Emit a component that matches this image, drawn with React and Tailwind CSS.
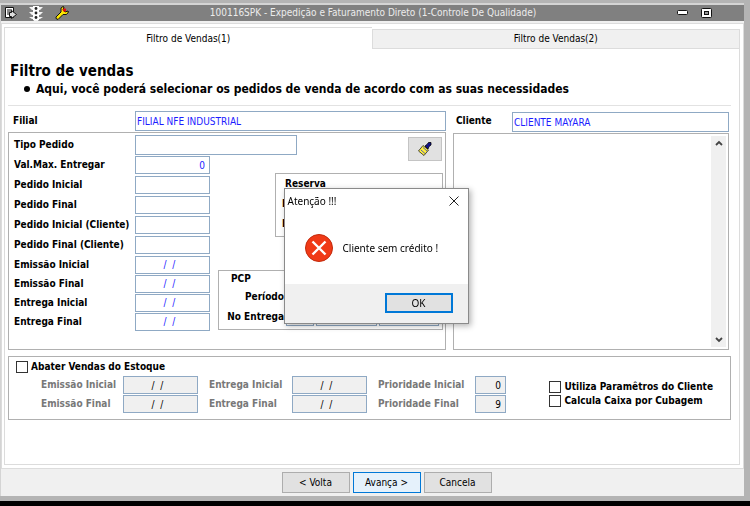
import React from 'react';

const box = 'border border-[#8fa9c4] bg-white text-[#1c1cff] outline-none';
const boxOff = 'h-[18px] border border-[#8fa9c4] bg-[#f0f0f0] font-normal text-black outline-none';
const panel = 'border border-[#b0b0b0]';
const winButton = 'h-[21px] w-[68px] border text-center leading-[18px]';

const textFields = [
  { id: 'valMax', label: 'Val.Max. Entregar', value: '0' },
  { id: 'pedidoInicial', label: 'Pedido Inicial', value: '' },
  { id: 'pedidoFinal', label: 'Pedido Final', value: '' },
  { id: 'pedidoInicialCliente', label: 'Pedido Inicial (Cliente)', value: '' },
  { id: 'pedidoFinalCliente', label: 'Pedido Final (Cliente)', value: '' },
];

const dateFields = [
  { id: 'emissaoInicial', label: 'Emissão Inicial' },
  { id: 'emissaoFinal', label: 'Emissão Final' },
  { id: 'entregaInicial', label: 'Entrega Inicial' },
  { id: 'entregaFinal', label: 'Entrega Final' },
];

const TitleBar = () => (
  <header className="flex h-4 items-center bg-[#808080] pr-8 pl-1 text-[#ececec]">
    <div className="flex items-center gap-3">
      <svg width="12" height="12" viewBox="0 0 12 12">
        <path d="M0.5 0.5h8v10h-8z" fill="#fff" stroke="#111" />
        <path d="M2 3h5M2 5h4M2 7h4" stroke="#111" />
        <path d="M6.5 3.5l5 4-5 4v-2h-2v-4h2z" fill="#ddd" stroke="#111" />
      </svg>
      <svg width="14" height="16" viewBox="0 0 14 16">
        <path d="M0 2h4V1h6v1h4l-3 3H3zM0 7h14l-3 3H3zM0 12h14l-3 2h-1l-1 2H5l-1-2H3z" fill="#f4f4f4" />
        <path d="M4 1h6v14H4z" fill="#fff" />
        <circle cx="7" cy="3.5" r="1.4" fill="#222" />
        <circle cx="7" cy="8" r="1.4" fill="#222" />
        <circle cx="7" cy="12.5" r="1.4" fill="#222" />
      </svg>
      <svg width="14" height="14" viewBox="0 0 14 14">
        <path d="M1 11l5-5V2l2-1.5 1 0.5-1 3 2 2 3-1 0.5 1-2 2.5H8l-5 5-2-1z" fill="#ffe800" stroke="#111" />
        <circle cx="9.5" cy="4" r="1.8" fill="#e01010" />
      </svg>
    </div>
    <h1 className="flex-1 text-center">100116SPK - Expedição e Faturamento Direto (1-Controle De Qualidade)</h1>
    <div className="flex items-center gap-3">
      <button type="button" aria-label="Minimizar">
        <svg width="12" height="6" viewBox="0 0 12 6">
          <rect x="0.5" y="0.5" width="10" height="4" rx="1" fill="#fff" stroke="#111" />
        </svg>
      </button>
      <button type="button" aria-label="Restaurar">
        <svg width="11" height="10" viewBox="0 0 11 10">
          <rect x="0.5" y="0.5" width="10" height="9" rx="1" fill="#fff" stroke="#111" />
          <rect x="3.5" y="3.5" width="4" height="3" fill="#999" stroke="#111" />
        </svg>
      </button>
    </div>
  </header>
);

const Dialog = () => (
  <div className="fixed inset-0 flex items-center justify-center pt-[5px] pl-0.5">
    <div
      role="dialog"
      aria-label="Atenção !!!"
      className="w-[185px] border border-[#8a8a8a] bg-white font-['Noto_Sans','Open_Sans',sans-serif] shadow-[2px_2px_6px_rgba(0,0,0,0.3)]"
    >
      <div className="flex h-6 items-center justify-between pr-2 pl-[3px]">
        <span>Atenção !!!</span>
        <button type="button" aria-label="Fechar">
          <svg width="12" height="12" viewBox="0 0 12 12">
            <path d="M1.5 1.5l9 9M10.5 1.5l-9 9" stroke="#222" fill="none" />
          </svg>
        </button>
      </div>
      <div className="flex h-[71px] items-center gap-[10px] pl-5">
        <svg width="28" height="28" viewBox="0 0 28 28">
          <circle cx="14" cy="14" r="13.5" fill="#f03a17" stroke="#c22a0c" />
          <path d="M7.5 7.5l13 13M20.5 7.5l-13 13" stroke="#fff" strokeWidth="2.4" />
        </svg>
        <p>Cliente sem crédito !</p>
      </div>
      <div className="flex h-[39px] items-center justify-end bg-[#f0f0f0] pr-[15px]">
        <button type="button" className="h-5 w-[68px] border-2 border-[#0078d7] bg-[#e1e1e1] leading-4">OK</button>
      </div>
    </div>
  </div>
);

const Check = ({ id, label }) => (
  <div className="flex h-[14px] items-center gap-[3px] font-bold">
    <input id={id} type="checkbox" className="size-3 appearance-none border border-[#333] bg-white" />
    <label htmlFor={id}>{label}</label>
  </div>
);

const ReservaGroup = () => (
  <fieldset className={`${panel} h-[64px] w-[168px] min-w-0 pt-0.5 pr-3 pl-[5px] font-bold`}>
    <h3 className="pb-0.5 pl-1">Reserva</h3>
    <div className="flex h-5 items-center justify-between pl-px">
      <label htmlFor="reservaInicial">Inicial</label>
      <input id="reservaInicial" className={`${box} h-[18px] w-[75px] font-normal`} />
    </div>
    <div className="flex h-5 items-center justify-between pl-px">
      <label htmlFor="reservaFinal">Final</label>
      <input id="reservaFinal" className={`${box} h-[18px] w-[75px] font-normal`} />
    </div>
  </fieldset>
);

const PcpGroup = () => (
  <fieldset className={`${panel} h-[60px] w-[225px] min-w-0 pr-[3px] font-bold`}>
    <h3 className="pl-3">PCP</h3>
    <div className="flex h-5 items-center gap-0.5">
      <label htmlFor="pcpPeriodo" className="w-[65px] text-right">Período</label>
      <input id="pcpPeriodo" className={`${box} h-[18px] w-7 font-normal`} />
    </div>
    <div className="flex h-5 items-center gap-0.5">
      <label htmlFor="pcpEntrega" className="w-[65px] text-right">No Entrega</label>
      <input id="pcpEntrega" className={`${box} h-[18px] w-7 font-normal`} />
      <input aria-label="Entrega de" className={`${box} h-[18px] min-w-0 flex-1 font-normal`} />
      <input aria-label="Entrega até" className={`${box} h-[18px] min-w-0 flex-1 font-normal`} />
    </div>
  </fieldset>
);

const ClearButton = () => (
  <button type="button" aria-label="Limpar" className="mr-px flex h-6 w-[34px] items-center justify-center border border-[#c4c4c4] bg-[#e1e1e1]">
    <svg width="14" height="14" viewBox="0 0 14 14">
      <path d="M5 3.5l5.5 4.5-4.5 5.5L0.5 9z" fill="#ffef3a" stroke="#222" strokeWidth="0.8" />
      <path d="M5 5.5l4 3.5M3 8l4 3.5" stroke="#2b3bd0" strokeWidth="0.8" />
      <path d="M7 4l2-1.5 1.5-2h2.5v2.5l-2 1.5-1 2.5z" fill="#10108c" stroke="#000" strokeWidth="0.8" />
    </svg>
  </button>
);

const ClienteList = () => (
  <div className={`${panel} flex h-[217px] justify-end p-0.5`}>
    <div className="flex w-[15px] flex-col items-center justify-between bg-[#f0f0f0] py-1">
      <svg width="8" height="6" viewBox="0 0 8 6">
        <path d="M1 5l3-3 3 3" stroke="#444" strokeWidth="1.8" fill="none" />
      </svg>
      <svg width="8" height="6" viewBox="0 0 8 6">
        <path d="M1 1l3 3 3-3" stroke="#444" strokeWidth="1.8" fill="none" />
      </svg>
    </div>
  </div>
);

const EstoqueGroup = () => (
  <section className={`${panel} mt-[6px] flex h-[64px] justify-between pt-[3px] pr-[17px] pl-[7px]`}>
    <div>
      <Check id="abater" label="Abater Vendas do Estoque" />
      <div className="grid grid-cols-[82px_86px_83px_86px_97px_31px] items-center gap-y-px pt-0.5 pl-[25px] font-bold text-[#787878]">
        <label htmlFor="abEmissaoInicial">Emissão Inicial</label>
        <input id="abEmissaoInicial" disabled defaultValue="/  /" className={`${boxOff} w-[75px] pr-1.5 text-center`} />
        <label htmlFor="abEntregaInicial">Entrega Inicial</label>
        <input id="abEntregaInicial" disabled defaultValue="/  /" className={`${boxOff} w-[75px] pr-1.5 text-center`} />
        <label htmlFor="abPrioridadeInicial">Prioridade Inicial</label>
        <input id="abPrioridadeInicial" disabled defaultValue="0" className={`${boxOff} pr-1 text-right`} />
        <label htmlFor="abEmissaoFinal">Emissão Final</label>
        <input id="abEmissaoFinal" disabled defaultValue="/  /" className={`${boxOff} w-[75px] pr-1.5 text-center`} />
        <label htmlFor="abEntregaFinal">Entrega Final</label>
        <input id="abEntregaFinal" disabled defaultValue="/  /" className={`${boxOff} w-[75px] pr-1.5 text-center`} />
        <label htmlFor="abPrioridadeFinal">Prioridade Final</label>
        <input id="abPrioridadeFinal" disabled defaultValue="9" className={`${boxOff} pr-1 text-right`} />
      </div>
    </div>
    <div className="pt-5">
      <Check id="parametros" label="Utiliza Paramêtros do Cliente" />
      <Check id="cubagem" label="Calcula Caixa por Cubagem" />
    </div>
  </section>
);

const App = () => {
  return (
    <div className="min-h-screen bg-black font-['DejaVu_Sans_Condensed','DejaVu_Sans',sans-serif] text-[10px] leading-4 text-black">
      <div className="bg-[#b4b4b4] pt-[3px] pr-1.5 pb-[5px]">
        <div className="border-t-2 border-l border-[#d4d4d4] bg-[#f0f0f0]">
          <TitleBar />
          <main className="mt-0.5 border border-[#dcdcdc] bg-white py-[3px] pr-[3px] pl-0.5">
            <div className="flex h-[22px] items-end">
              <button type="button" className="h-full flex-1 border-t border-l border-[#dcdcdc]">Filtro de Vendas(1)</button>
              <button type="button" className="h-5 flex-1 border border-[#dcdcdc] bg-[#f0f0f0]">Filtro de Vendas(2)</button>
            </div>
            <div className="border-x border-b border-[#dcdcdc] pr-2 pb-11 pl-[3px]">
              <h2 className="pt-3 pl-0.5 text-[15px] leading-5 font-bold">Filtro de vendas</h2>
              <ul className="pl-4 text-[12px] font-bold">
                <li className="flex items-center gap-1.5">
                  <span className="size-1.5 rounded-full bg-black" />
                  Aqui, você poderá selecionar os pedidos de venda de acordo com as suas necessidades
                </li>
              </ul>
              <hr className="mt-2 mb-[5px] border-[#e2e2e2]" />

              <div className="flex gap-[7px]">
                <section className="w-[438px]">
                  <div className="flex h-[21px] items-start">
                    <label htmlFor="filial" className="w-[127px] pt-0.5 pl-[5px] font-bold">Filial</label>
                    <input id="filial" defaultValue="FILIAL NFE INDUSTRIAL" className={`${box} h-5 min-w-0 flex-1 px-px`} />
                  </div>
                  <div className={`${panel} flex h-[218px] justify-between pt-0.5 pr-0.5`}>
                    <div>
                      <div className="flex h-5 items-center">
                        <label htmlFor="tipo" className="w-[126px] pl-[5px] font-bold">Tipo Pedido</label>
                        <input id="tipo" className={`${box} h-5 w-[162px] px-1`} />
                      </div>
                      {textFields.map((f) => (
                        <div key={f.id} className="flex h-5 items-center">
                          <label htmlFor={f.id} className="w-[126px] pl-[5px] font-bold">{f.label}</label>
                          <input id={f.id} defaultValue={f.value} className={`${box} h-[18px] w-[75px] px-1 text-right`} />
                        </div>
                      ))}
                      {dateFields.map((f) => (
                        <div key={f.id} className="flex h-[19px] items-center">
                          <label htmlFor={f.id} className="w-[126px] pl-[5px] font-bold">{f.label}</label>
                          <input id={f.id} defaultValue="/  /" className={`${box} h-[18px] w-[75px] pr-1.5 text-center`} />
                        </div>
                      ))}
                    </div>
                    <div className="-ml-20 flex flex-col items-end pt-0.5">
                      <ClearButton />
                      <div className="mt-3">
                        <ReservaGroup />
                      </div>
                      <div className="mt-[33px]">
                        <PcpGroup />
                      </div>
                    </div>
                  </div>
                </section>

                <section className="min-w-0 flex-1 pr-0.5">
                  <div className="flex h-[22px] items-start pt-px">
                    <label htmlFor="cliente" className="w-[59px] pt-px pl-[3px] font-bold">Cliente</label>
                    <input id="cliente" defaultValue="CLIENTE MAYARA" className={`${box} h-5 min-w-0 flex-1 px-px`} />
                  </div>
                  <ClienteList />
                </section>
              </div>

              <EstoqueGroup />
            </div>
          </main>
          <footer className="flex h-[27px] items-center justify-center gap-[3px] pl-7">
            <button type="button" className={`${winButton} border-[#adadad] bg-[#e1e1e1]`}>&lt; Volta</button>
            <button type="button" className={`${winButton} border-[#0078d7] bg-[#e5f1fb]`}>Avança &gt;</button>
            <button type="button" className={`${winButton} border-[#adadad] bg-[#e1e1e1]`}>Cancela</button>
          </footer>
        </div>
      </div>
      <Dialog />
    </div>
  );
};

export default App;
